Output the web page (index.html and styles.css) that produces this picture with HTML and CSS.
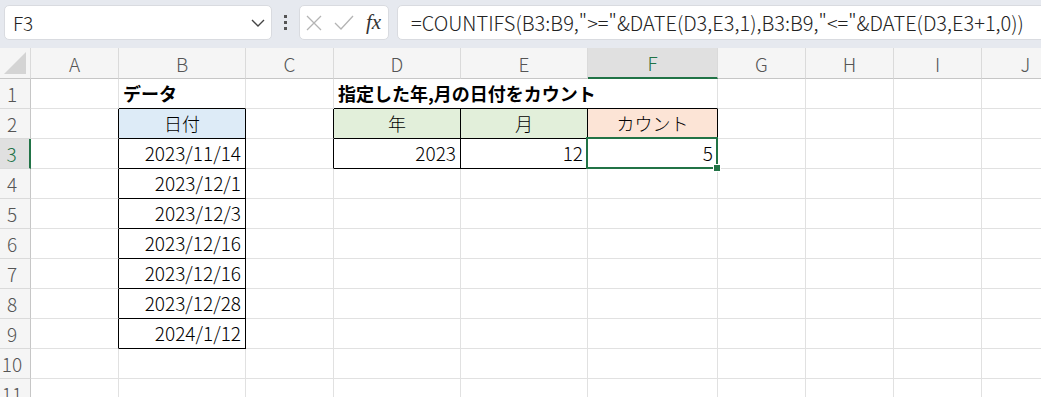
FILE: index.html
```html
<!DOCTYPE html>
<html lang="ja">
<head>
<meta charset="utf-8">
<link rel="stylesheet" href="styles.css">
</head>
<body>
<div class="toolbar">
  <div class="namebox">
    <span class="nb-text">F3</span>
    <svg class="chev" width="14" height="8" viewBox="0 0 14 8"><polyline points="1,1 7,7 13,1" fill="none" stroke="#444" stroke-width="1.4"/></svg>
  </div>
  <div class="dots"><i></i><i></i><i></i></div>
  <div class="fxbox">
    <svg width="16" height="16" viewBox="0 0 16 16"><path d="M1 1 L15 15 M15 1 L1 15" stroke="#b4b4b4" stroke-width="1.3" fill="none"/></svg>
    <svg width="20" height="16" viewBox="0 0 20 16"><path d="M1 8 L7 14 L19 1" stroke="#b4b4b4" stroke-width="1.3" fill="none"/></svg>
    <span class="fx">fx</span>
  </div>
  <div class="formula">=COUNTIFS(B3:B9,"&gt;="&amp;DATE(D3,E3,1),B3:B9,"&lt;="&amp;DATE(D3,E3+1,0))</div>
</div>
<div class="wrap">
<div class="sheet">
  <div class="h corner"><span class="tri"></span></div>
  <div class="h">A</div><div class="h">B</div><div class="h">C</div><div class="h">D</div><div class="h">E</div><div class="h sel-col">F</div><div class="h">G</div><div class="h">H</div><div class="h">I</div><div class="h">J</div>

  <div class="rh">1</div>
  <div class="c"></div><div class="c bold lb">データ</div><div class="c"></div><div class="c bold lb span3">指定した年,月の日付をカウント</div><div class="c"></div><div class="c"></div><div class="c"></div><div class="c"></div>

  <div class="rh">2</div>
  <div class="c lr"></div><div class="c t ctr blue">日付</div><div class="c lr"></div><div class="c t ctr green">年</div><div class="c t ctr green">月</div><div class="c t ctr orange">カウント</div><div class="c"></div><div class="c"></div><div class="c"></div><div class="c"></div>

  <div class="rh sel-row">3</div>
  <div class="c lr"></div><div class="c t num">2023/11/14</div><div class="c lr"></div><div class="c t num">2023</div><div class="c t num">12</div><div class="c t num active">5<span class="selbox"></span><span class="handle"></span></div><div class="c"></div><div class="c"></div><div class="c"></div><div class="c"></div>

  <div class="rh">4</div>
  <div class="c lr"></div><div class="c t num">2023/12/1</div><div class="c"></div><div class="c"></div><div class="c"></div><div class="c"></div><div class="c"></div><div class="c"></div><div class="c"></div><div class="c"></div>

  <div class="rh">5</div>
  <div class="c lr"></div><div class="c t num">2023/12/3</div><div class="c"></div><div class="c"></div><div class="c"></div><div class="c"></div><div class="c"></div><div class="c"></div><div class="c"></div><div class="c"></div>

  <div class="rh">6</div>
  <div class="c lr"></div><div class="c t num">2023/12/16</div><div class="c"></div><div class="c"></div><div class="c"></div><div class="c"></div><div class="c"></div><div class="c"></div><div class="c"></div><div class="c"></div>

  <div class="rh">7</div>
  <div class="c lr"></div><div class="c t num">2023/12/16</div><div class="c"></div><div class="c"></div><div class="c"></div><div class="c"></div><div class="c"></div><div class="c"></div><div class="c"></div><div class="c"></div>

  <div class="rh">8</div>
  <div class="c lr"></div><div class="c t num">2023/12/28</div><div class="c"></div><div class="c"></div><div class="c"></div><div class="c"></div><div class="c"></div><div class="c"></div><div class="c"></div><div class="c"></div>

  <div class="rh">9</div>
  <div class="c lr"></div><div class="c t num">2024/1/12</div><div class="c"></div><div class="c"></div><div class="c"></div><div class="c"></div><div class="c"></div><div class="c"></div><div class="c"></div><div class="c"></div>

  <div class="rh">10</div>
  <div class="c"></div><div class="c"></div><div class="c"></div><div class="c"></div><div class="c"></div><div class="c"></div><div class="c"></div><div class="c"></div><div class="c"></div><div class="c"></div>

  <div class="rh">11</div>
  <div class="c"></div><div class="c"></div><div class="c"></div><div class="c"></div><div class="c"></div><div class="c"></div><div class="c"></div><div class="c"></div><div class="c"></div><div class="c"></div>
</div>
</div>
</body>
</html>
```

FILE: styles.css
```css
html, body {
  margin: 0;
  padding: 0;
  background: #ffffff;
  font-family: "Noto Sans CJK JP", "Noto Sans", sans-serif;
  overflow: hidden;
}

.toolbar {
  height: 48px;
  background: #e6e9ef;
  display: flex;
  align-items: flex-start;
  padding: 5px 0 0 4px;
  box-sizing: border-box;
}

.namebox {
  width: 268px;
  height: 35px;
  background: #fff;
  border: 1px solid #d9dbe0;
  border-radius: 5px;
  box-sizing: border-box;
  display: flex;
  align-items: center;
  justify-content: space-between;
  padding: 0 6px 0 8px;
}

.nb-text {
  font-size: 19px;
  font-weight: 300;
  color: #222;
}

.chev { margin-top: 1px; }

.dots {
  width: 27px;
  height: 35px;
  display: flex;
  flex-direction: column;
  align-items: center;
  justify-content: center;
  gap: 3px;
}

.dots i {
  display: block;
  width: 3px;
  height: 3px;
  background: #555;
}

.fxbox {
  width: 90px;
  height: 35px;
  background: #fff;
  border: 1px solid #d9dbe0;
  border-radius: 5px;
  box-sizing: border-box;
  display: flex;
  align-items: center;
  padding: 0 0 0 6px;
  gap: 12px;
}

.fx {
  font-family: "Liberation Serif", "DejaVu Serif", serif;
  font-style: italic;
  font-size: 21px;
  color: #333;
}

.formula {
  flex: 1;
  margin-left: 8px;
  margin-right: -10px;
  height: 35px;
  background: #fff;
  border: 1px solid #d9dbe0;
  border-radius: 5px;
  box-sizing: border-box;
  font-size: 20px;
  font-weight: 300;
  color: #222;
  padding: 0 0 0 13px;
  line-height: 33px;
  white-space: nowrap;
}

.wrap {
  width: 1041px;
  overflow: hidden;
}

.sheet {
  display: grid;
  grid-template-columns: 31px 88px 127px 88px 127px 127px 130px 88px 88px 88px 88px;
  grid-template-rows: 31px;
  grid-auto-rows: 30px;
  width: max-content;
}

.h, .rh, .c {
  box-sizing: border-box;
  white-space: nowrap;
}

.h {
  background: #f5f5f5;
  border-right: 1px solid #dadada;
  border-bottom: 1px solid #c6c6c6;
  display: flex;
  align-items: center;
  justify-content: center;
  font-size: 19px;
  font-weight: 300;
  color: #555;
}

.corner {
  justify-content: flex-end;
  align-items: flex-end;
  padding: 0 4px 4px 0;
}

.tri {
  width: 0;
  height: 0;
  border-left: 22px solid transparent;
  border-bottom: 22px solid #d4d4d4;
}

.sel-col {
  background: #e0e0e0;
  color: #217346;
  border-bottom: 2px solid #217346;
}

.rh {
  background: #f5f5f5;
  border-right: 1px solid #c6c6c6;
  border-bottom: 1px solid #dadada;
  display: flex;
  align-items: center;
  justify-content: center;
  padding-right: 6px;
  font-size: 19px;
  font-weight: 300;
  color: #555;
}

.sel-row {
  background: #e0e0e0;
  color: #217346;
  border-right: 2px solid #217346;
}

.c {
  border-right: 1px solid #e1e1e1;
  border-bottom: 1px solid #e1e1e1;
  display: flex;
  align-items: flex-end;
  padding: 0 4px 3px 4px;
  font-size: 18px;
  font-weight: 300;
  color: #000;
  line-height: 24px;
}

.c.num { font-size: 19px; }

.span3 { grid-column: span 3; }

.c.bold { font-weight: bold; }

.lb { border-bottom-color: #000; }
.lr { border-right-color: #000; }
.t { border-right-color: #000; border-bottom-color: #000; }

.ctr { justify-content: center; }
.num { justify-content: flex-end; }

.blue { background: #ddebf7; }
.green { background: #e2efda; }
.orange { background: #fce4d6; }

.active { position: relative; }

.selbox {
  position: absolute;
  left: -2px;
  top: -2px;
  right: -1px;
  bottom: -1px;
  border: 2px solid #217346;
}

.handle {
  position: absolute;
  right: -4px;
  bottom: -4px;
  width: 6px;
  height: 6px;
  background: #217346;
  border: 1px solid #fff;
}
```
